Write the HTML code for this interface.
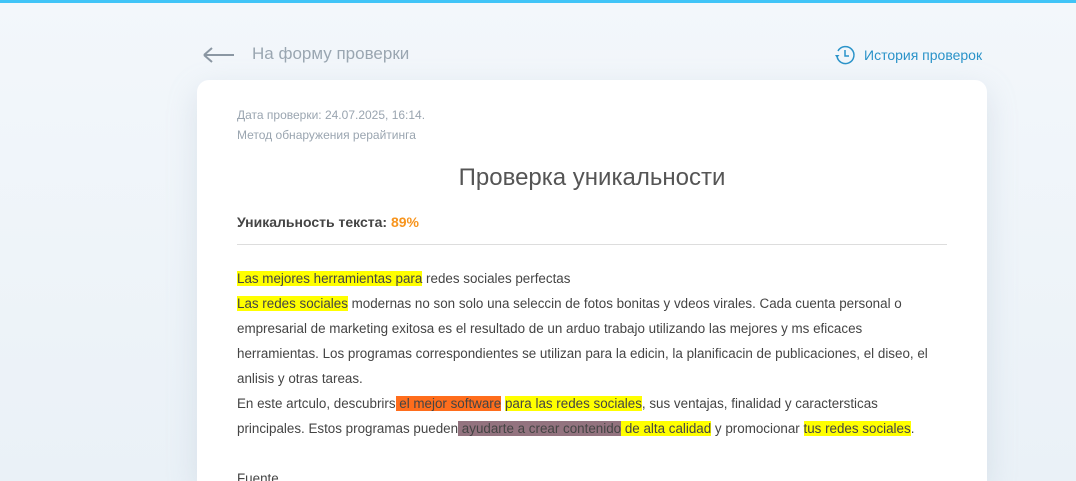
<!DOCTYPE html>
<html style="overflow:hidden;height:481px"><head><meta charset="utf-8"><style>
*{margin:0;padding:0;box-sizing:border-box}
body{width:1076px;height:481px;overflow:hidden;background:linear-gradient(180deg,#f3f7fb,#eaf1f7);font-family:"Liberation Sans",sans-serif;position:relative}
.top{position:absolute;left:0;top:0;width:1076px;height:3px;background:#40c4f7}
.back{position:absolute;left:202px;top:44px;font-size:17px;color:#9aa6b1}
.back span{position:absolute;left:50px;top:0;white-space:nowrap}
.hist{position:absolute;left:834px;top:44px;font-size:14px;color:#2b93c9;white-space:nowrap}
.hist span{position:absolute;left:30px;top:3px}
.card{position:absolute;left:197px;top:80px;width:790px;height:401px;background:#fff;border-radius:12px 12px 0 0;box-shadow:0 10px 30px rgba(150,170,190,.25);overflow:hidden}
.meta{position:absolute;left:40px;top:25px;font-size:12px;color:#9aa5b0;line-height:20px}
h1{position:absolute;left:0;width:790px;top:84px;text-align:center;font-weight:300;font-size:24px;color:#555}
.uniq{position:absolute;left:40px;top:134px;font-size:14px;font-weight:bold;color:#444}
.uniq b{color:#f7941d}
.hr{position:absolute;left:40px;top:164px;width:710px;height:1px;background:#ddd}
.txt{position:absolute;left:40px;top:186px;width:720px;font-size:13.4px;line-height:25px;color:#444;white-space:nowrap}
.y{background:#ffff00}.o{background:#ff6d1c}.p{background:#93737f}
</style></head><body>
<div class="top"></div>
<div class="back"><svg width="34" height="20" viewBox="0 0 34 20" style="position:absolute;left:0;top:1px"><path d="M2 10H32M2 10L10 3M2 10L10 17" stroke="#8b97a3" stroke-width="2" fill="none"/></svg><span>На форму проверки</span></div>
<div class="hist"><svg width="22" height="22" viewBox="0 0 22 22" style="position:absolute;left:0;top:0"><path d="M4 7A8.5 8.5 0 1 1 3 12" stroke="#2b93c9" stroke-width="1.5" fill="none"/><path d="M11 6V12H15" stroke="#2b93c9" stroke-width="1.5" fill="none"/><path d="M1 11L3 14L5.5 11Z" fill="#2b93c9"/></svg><span>История проверок</span></div>
<div class="card">
<div class="meta">Дата проверки: 24.07.2025, 16:14.<br>Метод обнаружения рерайтинга</div>
<h1>Проверка уникальности</h1>
<div class="uniq">Уникальность текста: <b>89%</b></div>
<div class="hr"></div>
<div class="txt">
<span class="y">Las mejores herramientas para</span> redes sociales perfectas<br>
<span class="y">Las redes sociales</span> modernas no son solo una seleccin de fotos bonitas y vdeos virales. Cada cuenta personal o<br>
empresarial de marketing exitosa es el resultado de un arduo trabajo utilizando las mejores y ms eficaces<br>
herramientas. Los programas correspondientes se utilizan para la edicin, la planificacin de publicaciones, el diseo, el<br>
anlisis y otras tareas.<br>
En este artculo, descubrirs<span class="o"> el mejor software</span> <span class="y">para las redes sociales</span>, sus ventajas, finalidad y caractersticas<br>
principales. Estos programas pueden<span class="p"> ayudarte a crear contenido</span><span class="y"> de alta calidad</span> y promocionar <span class="y">tus redes sociales</span>.<br>
<br>
Fuente
</div>
</div>
</body></html>
